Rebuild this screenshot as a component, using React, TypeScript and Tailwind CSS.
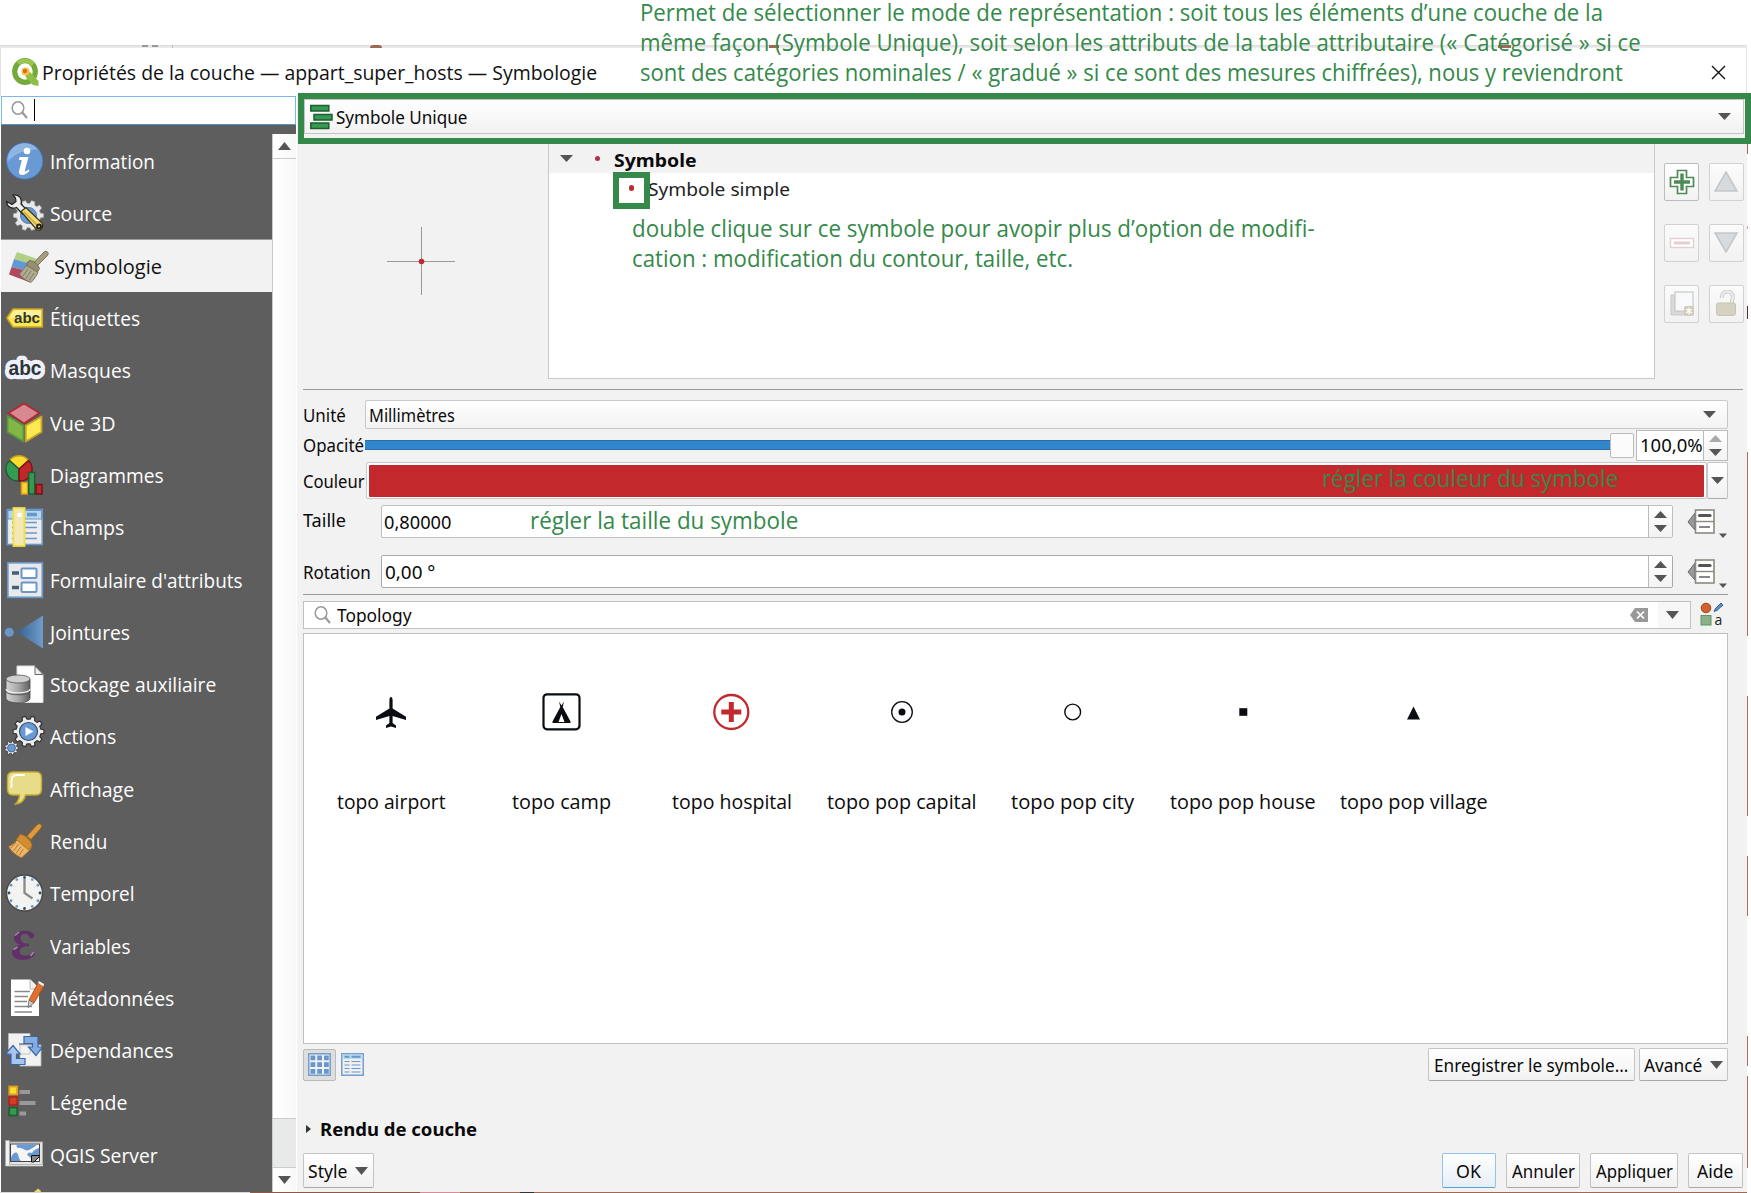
import React, { useLayoutEffect, useRef, useState } from "react";

/* Text that is condensed or stretched to occupy exactly `w` pixels. */
function Fit({ w, children, className = "" }: { w: number; children: React.ReactNode; className?: string }) {
  const ref = useRef<HTMLSpanElement>(null);
  const [scale, setScale] = useState(1);
  useLayoutEffect(() => {
    if (ref.current && ref.current.offsetWidth) setScale(w / ref.current.offsetWidth);
  }, [w]);
  return (
    <span className={"inline-block shrink-0 whitespace-nowrap " + className} style={{ width: w }}>
      <span ref={ref} className="inline-block origin-left whitespace-nowrap" style={{ transform: `scaleX(${scale})` }}>
        {children}
      </span>
    </span>
  );
}

function Tri({ up = false, w = 13, h = 7, className = "fill-[#555]" }: { up?: boolean; w?: number; h?: number; className?: string }) {
  return (
    <svg width={w} height={h} viewBox="0 0 12 7" preserveAspectRatio="none" className={"shrink-0 " + className}>
      <path d={up ? "M0 7L6 0L12 7Z" : "M0 0H12L6 7Z"} />
    </svg>
  );
}

function Magnifier() {
  return (
    <svg width="18" height="18" viewBox="0 0 18 18" fill="none" stroke="#999" className="shrink-0">
      <ellipse cx="7" cy="7" rx="5.800" ry="6.200" strokeWidth="1.500" />
      <path d="M11.300 11.500L16 17" strokeWidth="2.200" />
    </svg>
  );
}

function gear(cx: number, cy: number, r: number, ri: number, n: number) {
  const pts: string[] = [];
  for (let i = 0; i < n; i++) {
    const a = (i / n) * Math.PI * 2;
    const s = Math.PI / n;
    [[-0.62, ri], [-0.36, r], [0.36, r], [0.62, ri]].forEach(([k, q]) => {
      pts.push(`${(cx + Math.cos(a + k * s) * q).toFixed(2)},${(cy + Math.sin(a + k * s) * q).toFixed(2)}`);
    });
  }
  return pts.join(" ");
}

const icons: Record<string, React.ReactNode> = {
  info: (
    <>
      <circle cx="24.7" cy="26" r="18.3" fill="#6a9ad3" stroke="#3f72b4" strokeWidth="1" />
      <path d="M7.5 27A17.3 17.3 0 0 1 38 14.5C29 14 14 18 7.5 27Z" fill="#8fb6e3" />
      <circle cx="27" cy="16" r="3.3" fill="#fff" />
      <path d="M19.500 22H28.500L24.800 35.500C24.500 37 26 36.600 28.500 34.500L29.500 35.800C26 40.500 18.500 42 19 36.500L21.800 25H19Z" fill="#fff" />
    </>
  ),
  source: (
    <>
      <polygon points={gear(28.5, 28.500, 15, 12, 10)} fill="#e9e9e9" stroke="#bbb" strokeWidth=".8" />
      <circle cx="28.500" cy="28.500" r="8" fill="#6a9ad3" stroke="#4f7db5" />
      <path d="M13 8C18 7 22.500 11 21 17L26.500 22.500L22.500 27L16.500 20.500C12 22.500 7 20 6.500 14.500L12 17.500L16 14.500L15.500 11Z" fill="#eee" stroke="#222" strokeWidth="1.2" />
      <path d="M21 24.500L26 20.500L42 36C44 40 41 44.500 37 43Z" fill="#f0d873" stroke="#3a3313" strokeWidth="1.2" />
      <path d="M24 25L38 39" stroke="#c9a93c" strokeWidth="1.500" />
      <circle cx="39" cy="39.500" r="3" fill="#222" />
      <circle cx="39" cy="39.500" r="1" fill="#f0d873" />
    </>
  ),
  symbology: (
    <>
      <path d="M17 12L36 18.500L34 25L14 19Z" fill="#b1cf85" />
      <path d="M14 19L34 25L31 32L11.500 27Z" fill="#5f9ad6" />
      <path d="M11.500 27L31 32L29 42L9 34.500Z" fill="#b0485f" />
      <path d="M44 12C47 10 49.500 13 47.500 15.500L37 26L33.500 23Z" fill="#a79f7c" stroke="#6e6850" strokeWidth=".9" />
      <path d="M30 20.500C35 21.500 38 24.500 39.500 28.500L37.500 32L27 26L27 22.500Z" fill="#97906f" stroke="#6e6850" strokeWidth=".9" />
      <path d="M26.500 25.500L38 32.500C36.500 36 33.500 40 31 42.500C26 40.500 21.500 37.500 19.500 34Z" fill="#b0ac92" stroke="#77725a" strokeWidth=".9" />
      <path d="M28 29L23 36M31 31L26 38.500M34 33L29 40.500" stroke="#7d785f" strokeWidth="1" />
    </>
  ),
  labels: (
    <>
      <path d="M13 17H42.300V35H13L6.800 26Z" fill="#fbe94f" stroke="#c9a227" strokeWidth="1.600" />
      <path d="M14 18.500H41V25C30 24 20 26 9.500 25.500Z" fill="#fdf29a" />
      <text x="14" y="30.500" textLength="26" lengthAdjust="spacingAndGlyphs" fontFamily="Liberation Sans" fontWeight="700" fontSize="15.500" fill="#2d3538">abc</text>
    </>
  ),
  masks: (
    <>
      <text x="8.500" y="31" textLength="33" lengthAdjust="spacingAndGlyphs" fontFamily="Liberation Sans" fontWeight="700" fontSize="19.500" fill="#2d3538" stroke="#eef0fb" strokeWidth="8.500" strokeLinejoin="round" paintOrder="stroke">abc</text>
    </>
  ),
  cube: (
    <g strokeWidth="1.800" strokeLinejoin="round">
      <path d="M24 6.500L39.500 16L24 26.500L8.500 16Z" fill="#d98791" stroke="#b02a2c" />
      <path d="M7.500 19L23.500 28.500V44.500L7.500 35Z" fill="#84b546" stroke="#4f9a3f" />
      <path d="M25.800 28.500L41.500 19.500V35L25.800 44.500Z" fill="#fdea50" stroke="#c9a227" />
    </g>
  ),
  diagrams: (
    <g strokeWidth="1.500">
      <path d="M19 20L9.500 11.500A12 12 0 0 1 28.500 11.500Z" fill="#f9dc2e" stroke="#c99a1c" />
      <path d="M19 20V32A12 12 0 0 1 9.500 11.500Z" fill="#369a50" stroke="#1c5d33" />
      <path d="M19 20L28.500 11.500A12 12 0 0 1 19 32Z" fill="#c0262a" stroke="#6f1517" />
      <rect x="21.500" y="33.500" width="6" height="11.500" fill="#f9d52e" stroke="#e09a20" />
      <rect x="28.700" y="23.500" width="6" height="21.500" fill="#369a50" stroke="#1c5d33" />
      <rect x="36" y="35.500" width="6" height="9.500" fill="#c0262a" stroke="#6f1517" />
    </g>
  ),
  fields: (
    <>
      <rect x="7.300" y="8.500" width="35" height="35" fill="#ececec" stroke="#6a97cb" strokeWidth="1.600" />
      <rect x="8" y="9.500" width="33.500" height="8.500" fill="#b6d8ef" stroke="#6a97cb" strokeWidth="1" />
      <path d="M27 13.500H37" stroke="#6a97cb" strokeWidth="3.500" />
      <path d="M12 21.500H37M12 26.500H37M12 32H37M12 37.500H37" stroke="#6a97cb" strokeWidth="1.500" />
      <rect x="13.500" y="7" width="11" height="38" fill="#f3e7b5" stroke="#f2e23d" strokeWidth="1.800" />
      <rect x="17.500" y="12" width="4" height="4" fill="#fff" />
    </>
  ),
  form: (
    <>
      <rect x="7.800" y="8.800" width="34.500" height="34.500" fill="#e9e9e9" stroke="#6a97cb" strokeWidth="1.700" />
      <path d="M12 19H19M12 33.500H19" stroke="#46607a" strokeWidth="3.500" />
      <rect x="21.500" y="14.500" width="15" height="9.500" rx="1" fill="#fff" stroke="#6a97cb" strokeWidth="2" />
      <rect x="21.500" y="28.500" width="15" height="9.500" rx="1" fill="#fff" stroke="#6a97cb" strokeWidth="2" />
    </>
  ),
  joins: (
    <>
      <defs>
        <linearGradient id="jg"><stop offset="0" stopColor="#355f8c" /><stop offset="1" stopColor="#6f9ccd" /></linearGradient>
      </defs>
      <circle cx="9.300" cy="26.300" r="4.500" fill="#6a97cb" />
      <path d="M16.500 26L43 9.500V42.500Z" fill="url(#jg)" />
    </>
  ),
  storage: (
    <>
      <defs>
        <linearGradient id="sg"><stop offset="0" stopColor="#d5d5d5" /><stop offset=".5" stopColor="#a8a8a8" /><stop offset="1" stopColor="#606060" /></linearGradient>
      </defs>
      <path d="M17 8H35L43 16.500V44.500H17Z" fill="#fff" stroke="#ddd" />
      <path d="M35 8V16.500H43Z" fill="#eee" stroke="#666" strokeWidth="1" />
      <path d="M6 21V40C6 46.500 30 46.500 30 40V21Z" fill="url(#sg)" stroke="#4a4a4a" strokeWidth=".8" />
      <ellipse cx="18" cy="21" rx="12" ry="4" fill="#cfcfcf" stroke="#555" strokeWidth=".8" />
      <path d="M6 31C6 36 30 36 30 31" fill="none" stroke="#eee" strokeWidth="1.200" />
      <path d="M6 33C6 38 30 38 30 33" fill="none" stroke="#555" strokeWidth="1" />
    </>
  ),
  actions: (
    <>
      <polygon points={gear(28.500, 21.500, 15.500, 12.500, 10)} fill="#ececec" stroke="#333" strokeWidth="1.200" strokeLinejoin="round" />
      <circle cx="28.500" cy="21.500" r="9" fill="#6a9ad3" stroke="#30506f" strokeWidth="1.200" />
      <path d="M25.500 17L33.500 21.500L25.500 26Z" fill="#fff" />
      <polygon points={gear(11.500, 38, 7, 5.500, 9)} fill="#ececec" stroke="#333" strokeWidth=".8" />
      <circle cx="11.500" cy="38" r="4" fill="#6a9ad3" stroke="#30506f" strokeWidth=".7" />
    </>
  ),
  display: (
    <>
      <path d="M13 9H36Q41.500 9 41.500 15V26Q41.500 32 36 32H25.500C24.500 37 20.500 40.500 15.500 41C18.500 38 19.500 35.500 19.500 32H13Q7.500 32 7.500 26V15Q7.500 9 13 9Z" fill="#e7dc8a" stroke="#c4ac2d" strokeWidth="1.400" />
      <path d="M11.500 24V17Q12 12.500 16 12H24" fill="none" stroke="#fff" strokeWidth="1.800" strokeLinecap="round" />
    </>
  ),
  broom: (
    <g strokeLinejoin="round">
      <path d="M37 10C39 7.500 43 9.500 41 13L31 24.500L27 21Z" fill="#dd9a3e" stroke="#a3671c" strokeWidth="1" />
      <path d="M20 19.500L32 30.500C31 36 26 38 21.500 43C16 40.500 11 36.500 8.500 31.500C14 29 18 25 20 19.500Z" fill="#e8b76c" stroke="#a3671c" strokeWidth="1" />
      <path d="M20 19.500C24 19 31.500 25 32 30.500L28.500 35L16.500 24.500Z" fill="#d48d2e" stroke="#a3671c" strokeWidth=".8" />
      <path d="M16 27L11 33M18.500 29L13.500 36M21 31.500L16 38.500M23.500 34L19 40.500" stroke="#b97a2b" strokeWidth="1" />
    </g>
  ),
  clock: (
    <>
      <circle cx="24.500" cy="26" r="18" fill="#f3f3f1" stroke="#4a4a4a" strokeWidth="1.500" />
      {Array.from({ length: 12 }, (_, i) => (
        <circle key={i} cx={24.5 + Math.cos((i * Math.PI) / 6) * 15.5} cy={26 + Math.sin((i * Math.PI) / 6) * 15.5} r="1.400" fill={i % 3 ? "#6a97cb" : "#2d4a66"} />
      ))}
      <path d="M24.500 12V26L32.500 31.500" fill="none" stroke="#8a8a8a" strokeWidth="2.300" />
    </>
  ),
  epsilon: (
    <>
      <path d="M34 14C29 8.500 14 10 14 17.500C14 21.500 17 24 21 24.800C15 25.500 12 29 12 32.500C12 42 31 42 35 34.500L34.500 31.500C31.500 36 20 38 19.500 31.500C19.500 28 23 26 29 26.200V23.600C23 24 20.500 21.500 20.500 18C20.500 12.500 28 12 30 18C33 19.500 35 16.500 34 14Z" fill="#613068" />
      <path d="M15 15.500L19 12M13.500 29.500L17.500 27M30.500 36L34 32" stroke="#a684ab" strokeWidth="1.600" />
    </>
  ),
  metadata: (
    <>
      <path d="M11 7.500H30.500L39 16V44H11Z" fill="#fff" />
      <path d="M30 8V17H38" fill="#eee" stroke="#bbb" strokeWidth="1" />
      <path d="M14.500 19.500H30M14.500 24.500H28M14.500 29.500H27M14.500 34.500H32M14.500 40H32" stroke="#8a8a8a" strokeWidth="1.300" />
      <path d="M38 11L43.500 14.500L34 31L29 28Z" fill="#e0702d" stroke="#b24f1c" strokeWidth=".9" />
      <path d="M38 11L43.500 14.500L44 12L39 9Z" fill="#eee" />
      <path d="M29 28L34 31L28 35.500Z" fill="#ccc" stroke="#666" strokeWidth=".8" />
    </>
  ),
  deps: (
    <>
      <path d="M8.500 9.500H30V30H8.500ZM20 21H41V42H20Z" fill="#f1f1f1" stroke="#bbb" strokeWidth=".8" />
      <path d="M19 20H30" stroke="#999" strokeWidth="2" />
      <path d="M24 12.500H38V23H42.500L36 31.500L28.500 23H32.500V19.500H24Z" fill="#84ace0" stroke="#3666ab" strokeWidth="1.200" />
      <path d="M25 40.500H11V30H5.500L13 21.500L20 30H16.500V34.500H25Z" fill="#a9c7ec" stroke="#3666ab" strokeWidth="1.200" />
    </>
  ),
  legend: (
    <g strokeWidth="1.800">
      <rect x="9.200" y="10.500" width="8" height="8" fill="#fadc2e" stroke="#e09a20" />
      <rect x="9.200" y="21" width="8" height="8" fill="#cf4028" stroke="#b3251d" />
      <rect x="9.200" y="31.500" width="8" height="8" fill="#379a4e" stroke="#1f5f36" />
      <path d="M19.500 16H30M19.500 27H35.500M19.500 37.500H26" stroke="#999" strokeWidth="4" />
    </g>
  ),
  server: (
    <>
      <rect x="8" y="13" width="34.500" height="22.500" fill="#e5e5e5" stroke="#aaa" />
      <rect x="10.500" y="15" width="29" height="17.500" fill="#f6f6f6" stroke="#333" strokeWidth=".9" />
      <path d="M16.500 15.500H37C35 18 32 19 29 21C25 23 23 18 17 19ZM11 32V29C12 25 15 22.500 17 24C19 26 18 29 21 32ZM27 26C28 23 30 23 32 24C34 21 36 20 39 19V26L31 29Z" fill="#6a9ad3" />
      <path d="M31.500 33V26.500H39.500V27.500L34 33Z" fill="#888" stroke="#111" />
      <path d="M5.500 11.500H9.500V36.500H5.500Z" fill="#f2f2f2" stroke="#aaa" />
      <path d="M5.500 36.500H43" stroke="#ddd" strokeWidth="1.500" />
    </>
  ),
  next: <path d="M34 11L38 7.500L41 10L39 14H34Z" fill="#e9d96a" />,
};

const nav: [string, string, number][] = [
  ["info", "Information", 105],
  ["source", "Source", 62],
  ["symbology", "Symbologie", 108],
  ["labels", "Étiquettes", 90],
  ["masks", "Masques", 81],
  ["cube", "Vue 3D", 66],
  ["diagrams", "Diagrammes", 114],
  ["fields", "Champs", 74],
  ["form", "Formulaire d'attributs", 193],
  ["joins", "Jointures", 80],
  ["storage", "Stockage auxiliaire", 166],
  ["actions", "Actions", 66],
  ["display", "Affichage", 84],
  ["broom", "Rendu", 57],
  ["clock", "Temporel", 84],
  ["epsilon", "Variables", 80],
  ["metadata", "Métadonnées", 124],
  ["deps", "Dépendances", 123],
  ["legend", "Légende", 78],
  ["server", "QGIS Server", 108],
  ["next", "", 0],
];

function Sidebar() {
  return (
    <aside className="flex h-[1096px] w-[297px] shrink-0 flex-col overflow-hidden pl-px">
      <div className="flex h-[29px] w-[295px] shrink-0 items-center border border-[#7db7e8] border-b-[#5590c0] bg-white pb-px pl-[9px]">
        <Magnifier />
        <div className="ml-[5px] h-[22px] w-px bg-black" />
      </div>
      <div className="flex min-h-0 w-[295px] flex-1 bg-[#5e5e5e]">
        <nav className="flex w-[271px] shrink-0 flex-col overflow-hidden pt-[10px]">
          {nav.map(([icon, label, w]) => {
            const on = icon === "symbology";
            return (
              <div key={icon} className={on ? "-mt-px flex h-[53.3px] shrink-0 items-center border-t border-[#9a9a9a] bg-[#f2f2f2]" : "flex h-[52.3px] shrink-0 items-center"}>
                <svg width="50" height="52" viewBox="1 0 50 52" className="shrink-0">{icons[icon]}</svg>
                {label && (
                  <span className={on ? "ml-[3px] pt-[2px] text-[20px] leading-none text-[#111]" : "-ml-px pt-[2px] text-[20px] leading-none text-white"}>
                    <Fit w={w}>{label}</Fit>
                  </span>
                )}
              </div>
            );
          })}
        </nav>
        <div className="mt-[9px] flex w-[24px] flex-col border-l border-[#c9c9c9] bg-linear-to-r from-white to-[#f7f8f8]">
          <div className="flex h-[25px] items-center justify-center border-b border-[#ccc]"><Tri up h={8} /></div>
          <div className="flex-1" />
          <div className="h-[50px] border-y border-[#ccc] bg-[#e8eaea]" />
          <div className="flex h-[24px] items-center justify-center"><Tri h={8} /></div>
        </div>
      </div>
    </aside>
  );
}

function Spin({ dim = false }: { dim?: boolean }) {
  return (
    <div className="flex h-full w-[24px] shrink-0 flex-col items-center justify-center gap-[7px] border-l border-[#bbb] bg-linear-to-b from-white to-[#f3f3f3]">
      <Tri up className={dim ? "fill-[#aaa]" : "fill-[#555]"} />
      <Tri />
    </div>
  );
}

function DataDefined() {
  return (
    <svg width="42" height="36" viewBox="0 0 42 36" className="ml-[13px] shrink-0">
      <path d="M9 9L2 18L9 26Z" fill="#999" stroke="#666" strokeWidth="1" />
      <rect x="9.500" y="6" width="18.500" height="23" fill="#fff" stroke="#8a8a80" strokeWidth="1.600" />
      <path d="M9.500 17.500H28" stroke="#8a8a80" strokeWidth="1.400" />
      <path d="M13.500 11.500H24" stroke="#555" strokeWidth="3.200" strokeLinecap="round" />
      <path d="M13 23H24" stroke="#555" strokeWidth="1.400" />
      <path d="M33 29.500H41L37 34Z" fill="#555" />
    </svg>
  );
}

function ToolButton({ children, off = false }: { children: React.ReactNode; off?: boolean }) {
  return (
    <div className={off ? "flex h-[38px] w-[35px] items-center justify-center rounded-[2px] border border-[#d2d2d2] bg-linear-to-b from-[#fbfbfb] to-[#f2f2f2]" : "flex h-[38px] w-[35px] items-center justify-center rounded-[2px] border border-[#bdbdbd] bg-linear-to-b from-white to-[#f2f2f2]"}>
      <svg width="26" height="28" viewBox="0 0 26 28">{children}</svg>
    </div>
  );
}

const btn = "flex shrink-0 items-center justify-center rounded-[2px] border border-[#c4c4c4] border-b-[#aaa] bg-linear-to-b from-white to-[#f1f1f1]";

const symbols: [string, number, React.ReactNode][] = [
  ["topo airport", 109, <path d="M20 5C21 5 21.600 6.500 21.600 8.500V16.500L35 24.800V28L21.600 24V31L25 33.500V36L20 34.500L15 36V33.500L18.400 31V24L5 28V24.800L18.400 16.500V8.500C18.400 6.500 19 5 20 5Z" fill="#090c10" />],
  ["topo camp", 99, (
    <>
      <rect x="1.500" y="2.300" width="36" height="35" rx="3.500" fill="#fff" stroke="#090c10" strokeWidth="2.200" />
      <path d="M17 9.500L19.500 13.500L22 9.500L20.700 15L28.500 29.500V31H10.500V29.500L18.300 15Z" fill="#090c10" />
      <path d="M19.500 22L22.500 30H16.500Z" fill="#fff" />
    </>
  )],
  ["topo hospital", 120, (
    <>
      <circle cx="19.300" cy="20" r="17" fill="#fff" stroke="#c3282c" strokeWidth="2.300" />
      <path d="M16.800 10H21.800V17.500H29.300V22.500H21.800V30H16.800V22.500H9.300V17.500H16.800Z" fill="#c3282c" />
    </>
  )],
  ["topo pop capital", 150, (
    <>
      <circle cx="20" cy="20" r="10.300" fill="#fff" stroke="#090c10" strokeWidth="1.300" />
      <circle cx="20" cy="20" r="3.500" fill="#090c10" />
    </>
  )],
  ["topo pop city", 123, <circle cx="19.700" cy="20" r="7.900" fill="#fff" stroke="#090c10" strokeWidth="1.400" />],
  ["topo pop house", 146, <rect x="16.300" y="16.200" width="8" height="7.600" fill="#090c10" />],
  ["topo pop village", 148, <path d="M19.500 14.500L26 27.500H13Z" fill="#090c10" />],
];

function Main() {
  return (
    <main className="flex h-[1096px] w-[1450px] shrink-0 flex-col bg-[#f2f2f2] pl-px font-['Noto_Sans','Open_Sans',sans-serif] text-[18.5px] leading-none text-[#0a0a0a]">
      {/* renderer selector with highlight frame */}
      <div className="relative z-10 -mt-[3px] h-[51px] w-[1453px] shrink-0 border-[6.500px] border-[#35894a] bg-[#f2f2f2]">
        <div className="flex h-[35px] w-[1440px] items-center border border-[#c4c4c4] bg-linear-to-b from-white to-[#f2f2f2] pl-[5px] pr-[12px]">
          <svg width="23" height="26" viewBox="0 0 23 26" className="mr-[3px] shrink-0" fill="#369a50" stroke="#1c5d33" strokeWidth="1.500">
            <rect x=".8" y="1.500" width="18" height="5.500" />
            <rect x="4" y="10.500" width="18" height="5.500" />
            <rect x=".8" y="19" width="18" height="5.500" />
          </svg>
          <Fit w={131} className="pt-px">Symbole Unique</Fit>
          <div className="flex-1" />
          <Tri />
        </div>
      </div>

      {/* symbol preview, layer tree, layer buttons */}
      <div className="flex h-[245px] shrink-0">
        <div className="flex w-[250px] justify-center pr-[4px] pt-[82px]">
          <svg width="70" height="70" viewBox="0 0 70 70">
            <path d="M1 35.500H69M35.500 1V69" stroke="#999" strokeWidth="1" />
            <circle cx="35.500" cy="35.500" r="2.800" fill="#c3282c" />
          </svg>
        </div>
        <div className="h-[235px] w-[1107px] border border-t-0 border-[#c9c9c9] bg-white">
          <div className="flex h-[29px] items-center bg-[#f2f2f2] pl-[11px]">
            <Tri />
            <div className="ml-[22px] mr-[14px] size-[5px] rounded-full bg-[#b03050]" />
            <Fit w={83} className="pt-[3px] font-bold">Symbole</Fit>
          </div>
          <div className="flex h-[34px] items-center pl-[64px]">
            <div className="relative z-10 flex h-[37px] w-[37px] shrink-0 items-center justify-center border-[6px] border-[#35894a] bg-white">
              <div className="mb-1 size-[5.500px] rounded-full bg-[#c3282c]" />
            </div>
            <Fit w={142} className="-ml-[2px] pb-px text-[18.5px] text-[#222]">Symbole simple</Fit>
          </div>
        </div>
        <div className="ml-[9px] mt-[19px] grid h-[160px] grid-cols-2 content-between gap-x-[9.500px]">
          <ToolButton>
            <path d="M8.500 2.500H17.500V9.500H24.500V18.500H17.500V25.500H8.500V18.500H1.500V9.500H8.500Z" fill="#fff" stroke="#4d8a55" strokeWidth="1.700" />
            <path d="M13 5.500V22.500M5 14H21" stroke="#4d8a55" strokeWidth="3.400" />
          </ToolButton>
          <ToolButton off><path d="M13 4L24 23H2Z" fill="#d8dbde" stroke="#c3c6c9" strokeWidth="1.500" /></ToolButton>
          <ToolButton off>
            <rect x="1.500" y="9.500" width="23" height="9" fill="#fff" stroke="#e3cfd2" strokeWidth="1.400" />
            <path d="M5 14H21" stroke="#e3cfd2" strokeWidth="3" />
          </ToolButton>
          <ToolButton off><path d="M13 23L24 4H2Z" fill="#d8dbde" stroke="#c3c6c9" strokeWidth="1.500" /></ToolButton>
          <ToolButton off>
            <path d="M2 5V25H20V21H6V5Z" fill="#d9d9d9" stroke="#c9c9c9" />
            <rect x="6" y="2" width="18" height="19" fill="#f8f9fa" stroke="#c9ccce" strokeWidth="1.300" />
            <rect x="15" y="16" width="10" height="10" rx="2" fill="#cfccb8" />
            <path d="M20 17.500V24.500M17 19L23 23M17 23L23 19" stroke="#fff" strokeWidth="1.300" />
          </ToolButton>
          <ToolButton off>
            <path d="M9 8A5.500 5.500 0 1 1 19 10V14" fill="none" stroke="#cfcfcf" strokeWidth="4" />
            <path d="M9 8A5.500 5.500 0 1 1 19 10V14" fill="none" stroke="#f0f0f0" strokeWidth="1.800" />
            <rect x="3.500" y="13" width="19" height="12.500" rx="2" fill="#d5d2c2" stroke="#c8c4b0" />
          </ToolButton>
        </div>
      </div>

      <div className="ml-[5px] h-px w-[1440px] shrink-0 bg-[#999]" />

      <div className="flex w-[1430px] shrink-0 flex-col pl-[5px]">
        {/* unit */}
        <div className="mt-[10px] flex h-[29px] items-center">
          <Fit w={43} className="mr-[19px] pt-px">Unité</Fit>
          <div className="flex h-full flex-1 items-center justify-between rounded-[2px] border border-[#c8c8c8] bg-linear-to-b from-white to-[#f3f3f3] pl-[3px] pr-[11px]">
            <Fit w={86} className="pt-px">Millimètres</Fit>
            <Tri />
          </div>
        </div>
        {/* opacity */}
        <div className="flex h-[32px] items-center">
          <Fit w={61} className="mr-px pt-px">Opacité</Fit>
          <div className="h-[10px] flex-1 border-y border-[#2a6cae] bg-[#3085cb]" />
          <div className="h-[25px] w-[24px] rounded-[2px] border border-[#bbb] bg-[#fbfbfb]" />
          <div className="ml-[2px] flex h-[31px] w-[92px] items-center border border-[#bbb] bg-white pl-[3px]">
            <Fit w={63} className="pt-px">100,0%</Fit>
            <div className="ml-auto h-full"><Spin dim /></div>
          </div>
        </div>
        {/* colour */}
        <div className="mt-px flex h-[37px] items-center">
          <Fit w={62} className="mr-px pt-px">Couleur</Fit>
          <div className="h-full flex-1 rounded-[2px] border border-[#c8c8c8] bg-white p-[1.500px] pr-[2.500px]">
            <div className="h-full rounded-[1px] bg-[#c3282c]" />
          </div>
          <div className={btn + " h-full w-[21px]"}><Tri /></div>
        </div>
        {/* size */}
        <div className="mt-[6px] flex h-[33px] items-center">
          <Fit w={43} className="mb-[3px] mr-[35px]">Taille</Fit>
          <div className="flex h-full w-[1292px] items-center rounded-[2px] border border-[#c0c0c0] bg-white pl-[2px]">
            <Fit w={67} className="pt-[2px]">0,80000</Fit>
            <div className="ml-auto h-full"><Spin /></div>
          </div>
          <DataDefined />
        </div>
        {/* rotation */}
        <div className="mt-[17px] flex h-[33px] items-center">
          <Fit w={68} className="mr-[10px] pt-[2px]">Rotation</Fit>
          <div className="flex h-full w-[1292px] items-center rounded-[2px] border border-[#aaa] bg-white pl-[3px]">
            <Fit w={50} className="pt-[2px]">0,00 °</Fit>
            <div className="ml-auto h-full"><Spin /></div>
          </div>
          <DataDefined />
        </div>
        <div className="mt-[6px] h-px bg-[#999]" />
        {/* symbol library filter */}
        <div className="mt-[6px] flex h-[28px] items-center">
          <div className="flex h-full w-[1388px] items-center border border-[#c0c0c0] bg-white pl-[10px]">
            <Magnifier />
            <Fit w={75} className="ml-[5px]">Topology</Fit>
            <svg width="18" height="14" viewBox="0 0 18 14" className="mb-px ml-auto">
              <path d="M0 7L5 0H18V14H5Z" fill="#999" />
              <path d="M7 3.500L14 10.500M14 3.500L7 10.500" stroke="#fff" strokeWidth="1.700" />
            </svg>
            <div className="ml-[10px] flex h-full w-[32px] items-center justify-center bg-[#f7f7f7] pb-px pr-[4px]"><Tri h={8} /></div>
          </div>
          <svg width="26" height="26" viewBox="0 0 26 26" className="ml-[9px] overflow-visible">
            <circle cx="6" cy="6" r="4.800" fill="#d0622c" stroke="#a04a1e" />
            <path d="M14 9.500L15 7L21 1L23 3L17 8.500Z" fill="#5e8cc2" stroke="#345f92" strokeWidth=".9" />
            <rect x="1" y="13.500" width="10" height="9.500" fill="#8bb08b" stroke="#5c9464" />
            <text x="14.500" y="22.500" fontSize="14" fontFamily="Open Sans" fill="#222">a</text>
          </svg>
        </div>
        {/* symbol list */}
        <div className="mt-[4px] flex h-[411px] border border-[#c0c0c0] bg-white pl-[2px] text-[20px]">
          {symbols.map(([name, w, art]) => (
            <div key={name} className="flex w-[170.4px] shrink-0 flex-col items-center pt-[58px] font-['Open_Sans','Noto_Sans',sans-serif]">
              <svg width="40" height="40" viewBox="0 0 40 40">{art}</svg>
              <Fit w={w} className="mt-[59.500px]">{name}</Fit>
            </div>
          ))}
        </div>
        {/* view mode and symbol actions */}
        <div className="mt-[4px] flex h-[33px] items-center">
          <div className="flex h-[32px] w-[33px] items-center justify-center rounded-[2px] border border-[#bbb] bg-[#dedede]">
            <svg width="23" height="23" viewBox="0 0 23 23">
              <rect x=".8" y=".8" width="21.400" height="21.400" fill="#eef2f6" stroke="#6a97cb" strokeWidth="1.400" />
              {[2.500, 9.200, 16].map((x) => [2.500, 9.200, 16].map((y) => <rect key={x + "-" + y} x={x} y={y} width="4.800" height="4.800" fill="#6a97cb" />))}
            </svg>
          </div>
          <svg width="23" height="23" viewBox="0 0 23 23" className="ml-[5px]">
            <rect x=".8" y=".8" width="21.400" height="21.400" fill="#f0f0f0" stroke="#6a97cb" strokeWidth="1.400" />
            <rect x="1.500" y="1.500" width="20" height="4.500" fill="#b6dcef" />
            <path d="M3.500 3.700H8.500M10.500 3.700H19.500" stroke="#6a97cb" strokeWidth="2" />
            <path d="M3.500 8.500H8.500M10.500 8.500H19.500M3.500 12H8.500M10.500 12H19.500M3.500 15.500H8.500M10.500 15.500H19.500M3.500 19H8.500M10.500 19H19.500" stroke="#6a97cb" strokeWidth="1.200" />
          </svg>
          <div className={btn + " ml-auto h-full w-[207px] pr-[2px]"}><Fit w={194} className="pt-[2px]">Enregistrer le symbole…</Fit></div>
          <div className={btn + " ml-[4px] h-full w-[89px] gap-[8px] pr-px"}><Fit w={58} className="pt-[2px]">Avancé</Fit><Tri h={8} /></div>
        </div>
        {/* collapsed group */}
        <div className="mt-[36px] flex h-[24px] items-center pl-[3px]">
          <svg width="5" height="8" viewBox="0 0 5 8" className="mr-[9px]"><path d="M0 0L5 4L0 8Z" fill="#333" /></svg>
          <Fit w={157} className="font-bold">Rendu de couche</Fit>
        </div>
      </div>

      {/* dialog buttons */}
      <div className="mt-[12px] flex h-[35px] w-[1445px] shrink-0 items-center pl-[5px]">
        <div className={btn + " mr-auto h-full w-[71px] gap-[8px] pr-[2px]"}><Fit w={39} className="pt-[2px]">Style</Fit><Tri h={8} /></div>
        <div className="flex h-full w-[54px] items-center justify-center rounded-[2px] border border-[#8fc4ec] border-b-[#5b9fd6] bg-linear-to-b from-white to-[#e6eef5] pr-px"><Fit w={25} className="pt-[2px]">OK</Fit></div>
        <div className={btn + " ml-[10px] h-full w-[74px]"}><Fit w={63} className="pt-[2px]">Annuler</Fit></div>
        <div className={btn + " ml-[10px] h-full w-[88px]"}><Fit w={77} className="pt-[2px]">Appliquer</Fit></div>
        <div className={btn + " ml-[10px] h-full w-[55px] pr-px"}><Fit w={36} className="pt-[2px]">Aide</Fit></div>
      </div>
    </main>
  );
}

/* Green tutorial notes written over the dialog. */
const notes: [string, number, string][] = [
  ["left-[640px] top-px", 963, "Permet de sélectionner le mode de représentation : soit tous les éléments d’une couche de la"],
  ["left-[640px] top-[31px]", 1001, "même façon (Symbole Unique), soit selon les attributs de la table attributaire (« Catégorisé » si ce"],
  ["left-[640px] top-[61px]", 983, "sont des catégories nominales / « gradué » si ce sont des mesures chiffrées), nous y reviendront"],
  ["left-[632px] top-[217px]", 683, "double clique sur ce symbole pour avopir plus d’option de modifi-"],
  ["left-[632px] top-[247px]", 441, "cation : modification du contour, taille, etc."],
  ["left-[1322px] top-[467px]", 296, "régler la couleur du symbole"],
  ["left-[530px] top-[509px]", 268, "régler la taille du symbole"],
];

export default function App() {
  return (
    <div className="relative h-[1193px] w-[1751px] overflow-hidden bg-white font-['Open_Sans','Noto_Sans',sans-serif] text-[#111]">
      <div className="h-[45px]" />
      <div className="flex h-[3px] w-[1747px] bg-linear-to-b from-[#dcdcdc] to-[#efefef]">
        <div className="ml-[142px] h-[2px] w-[6px] bg-[#999]" />
        <div className="ml-[4px] h-[2px] w-[6px] bg-[#999]" />
        <div className="ml-[14px] h-full w-px bg-[#bbb]" />
        <div className="ml-[197px] h-full w-[12px] rounded-t-full bg-[#9c6a54]" />
        <div className="ml-[387px] h-full w-[10px] bg-[#9c6a54]" />
        <div className="ml-[719px] h-full w-[13px] bg-[#9c6a54]" />
      </div>
      <header className="flex h-[48px] w-[1747px] items-center border-x border-[#e2e2e2] pl-[11px] pr-[20px]">
        <svg width="28" height="29" viewBox="0 0 28 29" className="mr-[2px] shrink-0">
          <ellipse cx="13" cy="13.500" rx="10.300" ry="10.800" fill="#fff" stroke="#74a93c" strokeWidth="5.200" />
          <path d="M6 5.500A10.300 10.300 0 0 1 21 6.500" fill="none" stroke="#9cc64f" strokeWidth="4" />
          <path d="M12 12L18 14L26.500 23V28L21 27L14 19.500Z" fill="#8fbf46" />
          <circle cx="13.500" cy="13.500" r="4" fill="#f3c53f" />
          <circle cx="13" cy="13" r="2.200" fill="#dd6a2c" />
        </svg>
        <span className="pt-px text-[20px] leading-none"><Fit w={555}>Propriétés de la couche — appart_super_hosts — Symbologie</Fit></span>
        <svg width="15" height="15" viewBox="0 0 15 15" className="ml-auto" stroke="#111" strokeWidth="1.400">
          <path d="M1 1L14 14M14 1L1 14" />
        </svg>
      </header>
      <div className="flex h-[1096px]">
        <Sidebar />
        <Main />
        <div className="flex w-[4px] shrink-0 flex-col items-start">
          <div className="mt-[48px] h-[10px] w-px bg-[#9c6a54]" />
          <div className="mt-[72px] h-[3px] w-px bg-[#d59aa8]" />
          <div className="mt-[77px] h-[13px] w-px bg-[#4a3038]" />
          <div className="mt-[133px] h-[184px] w-px bg-[#a8705c]" />
          <div className="mt-[60px] h-[120px] w-px bg-[#a8705c]" />
          <div className="mt-[40px] h-[60px] w-px bg-[#a8705c]" />
          <div className="mt-[120px] h-[30px] w-px bg-[#a8705c]" />
          <div className="mt-[10px] h-[92px] w-px bg-[#a8705c]" />
        </div>
      </div>
      <div className="absolute bottom-0 left-0 flex h-px w-[1747px]">
        <div className="w-[250px] bg-[#d8d8d8]" />
        <div className="w-[170px] bg-[#8a5a48]" />
        <div className="w-[40px] bg-[#d58e98]" />
        <div className="w-[60px] bg-[#9c6a54]" />
        <div className="w-[14px] bg-[#333]" />
        <div className="flex-1 bg-[#9c6a54]" />
      </div>
      {notes.map(([pos, w, text]) => (
        <p key={text} className={"absolute z-20 text-[23px] leading-[23px] text-[#35894a] " + pos}>
          <Fit w={w}>{text}</Fit>
        </p>
      ))}
    </div>
  );
}
